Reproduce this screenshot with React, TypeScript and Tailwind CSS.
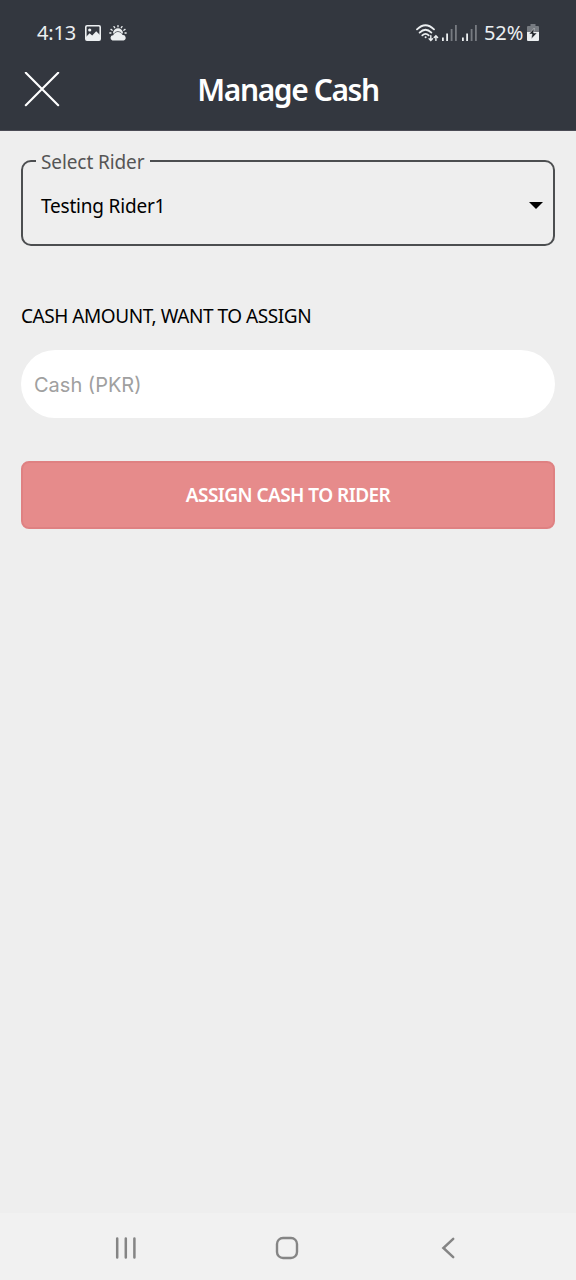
import { useState } from "react";

const RIDERS = ["Testing Rider1"];

function StatusBar() {
  return (
    <div className="flex h-[66px] items-center pl-[37px] pr-[37px] text-[#eceff1]">
      <span className="w-[39px] whitespace-nowrap text-[20px] leading-6 tracking-[-0.2px]">4:13</span>
      {/* Gallery */}
      <svg className="ml-[9px] h-4 w-4" viewBox="0 0 16 16">
        <rect x="0.8" y="0.8" width="14.4" height="14.4" rx="1.2" fill="none" stroke="currentColor" strokeWidth="1.6" />
        <circle cx="4.7" cy="5" r="1.6" fill="currentColor" />
        <path d="M1 12 4.6 8.2 7.2 10.6 11.2 6.2 15 10V15H1Z" fill="currentColor" />
      </svg>
      {/* Weather */}
      <svg className="ml-2 h-4 w-[18px]" viewBox="0 0 18 16">
        <path
          d="M9 .6V1.8M5 1.6l.7 1.1M13 1.6l-.7 1.1M2 4.4l1.2.8M16 4.4l-1.2.8M.8 8h1.2M17.2 8h-1.2"
          stroke="currentColor"
          strokeWidth="1.3"
          strokeLinecap="round"
        />
        <path d="M4 8.2a5 5 0 0 1 10 0l-1 .4A4.6 4.6 0 0 0 4.9 8.6Z" fill="currentColor" />
        <path d="M3.4 15.4a2.6 2.6 0 0 1 .8-5.1 5 5 0 0 1 9.4-.2A2.7 2.7 0 0 1 14.6 15.4Z" fill="currentColor" />
      </svg>

      <div className="ml-auto flex items-center">
        {/* Wi-Fi with traffic arrows */}
        <svg className="h-[18px] w-[23px]" viewBox="0 0 23 18" fill="none" stroke="currentColor" strokeLinecap="round">
          <path d="M1 5.4Q9.5-2.8 18 5.4" strokeWidth="1.8" />
          <path d="M3.6 8.6Q9.5 2.8 15.4 8.6" strokeWidth="1.8" />
          <path d="M6.3 11.4Q9.5 8.2 12.7 11.4" strokeWidth="1.8" />
          <circle cx="9.6" cy="13.3" r="1" fill="currentColor" stroke="none" />
          <path d="M14.8 11.6v4.6M13.1 14.7l1.7 1.7 1.7-1.7M19.9 16.4v-4.6M18.2 13.4l1.7-1.7 1.7 1.7" strokeWidth="1.4" />
        </svg>
        <SignalIcon className="ml-[3px]" />
        <SignalIcon className="ml-[5px]" />
        <span className="ml-[7px] w-[42px] whitespace-nowrap text-[20px] leading-6 tracking-[-0.1px]">52%</span>
        {/* Battery */}
        <svg className="ml-[1px] h-[18px] w-3" viewBox="0 0 12 18">
          <path d="M3.5 0h5v2H11a1 1 0 0 1 1 1v5H0V3a1 1 0 0 1 1-1h2.5Z" fill="#777b81" />
          <path d="M0 8h12v8a1 1 0 0 1-1 1H1a1 1 0 0 1-1-1Z" fill="currentColor" />
          <path d="M7.2 4.2 2 10h3.1l-.8 5L10 9H6.6Z" fill="#1f2329" stroke="#eceff1" strokeWidth=".5" />
        </svg>
      </div>
    </div>
  );
}

function SignalIcon({ className }: { className: string }) {
  return (
    <svg className={`h-4 w-[15px] ${className}`} viewBox="0 0 15 16">
      <rect x="0" y="12.5" width="1.8" height="3.5" fill="currentColor" />
      <rect x="4.2" y="8.5" width="1.8" height="7.5" fill="currentColor" />
      <rect x="8.7" y="4" width="1.8" height="12" fill="#777b81" />
      <rect x="13" y="0" width="1.8" height="16" fill="#777b81" />
    </svg>
  );
}

function NavBar() {
  return (
    <nav className="flex h-[67px] items-center bg-[#f1f1f1] pl-[115px] pr-[121px] pt-[2px] text-[#858585]">
      <svg className="h-[22px] w-[22px]" viewBox="0 0 22 22" stroke="currentColor" strokeWidth="2.5" strokeLinecap="round">
        <path d="M2.2 1.6v19M10.8 1.6v19M19.4 1.6v19" />
      </svg>
      <svg className="ml-[138px] h-6 w-6" viewBox="0 0 24 24" fill="none" stroke="currentColor" strokeWidth="2.4">
        <rect x="2" y="2" width="20" height="20" rx="6" />
      </svg>
      <svg className="ml-auto h-[22px] w-[14px]" viewBox="0 0 14 22" fill="none" stroke="currentColor" strokeWidth="2.5" strokeLinecap="round">
        <path d="M12.2 1.8 2.4 11l9.8 9.2" />
      </svg>
    </nav>
  );
}

export default function App() {
  const [rider] = useState(RIDERS[0]);
  const [amount, setAmount] = useState("");

  return (
    <div className="flex h-[1280px] w-[576px] flex-col overflow-hidden bg-[#eeeeee] font-['Noto_Sans',sans-serif]">
      <header className="h-[130px] border-b border-[#4a4b54] bg-[#33373f] box-content">
        <StatusBar />
        <div className="grid h-12 grid-cols-[1fr_auto_1fr] items-center">
          <button className="ml-[24px] w-9" aria-label="Close">
            <svg className="h-9 w-9" viewBox="0 0 36 36" stroke="#fff" strokeWidth="2.1" strokeLinecap="round">
              <path d="M1.8 .8 34.2 33.2M34.2 .8 1.8 33.2" />
            </svg>
          </button>
          <h1 className="whitespace-nowrap text-[30px] font-semibold leading-10 tracking-[-1.4px] text-white">Manage Cash</h1>
        </div>
      </header>

      <main className="flex flex-1 flex-col px-[21px] pt-[18px]">
        {/* Rider select */}
        <fieldset className="h-[97px] rounded-[10px] border-2 border-[#4c4e50] pl-[13px] pr-[10px]">
          <legend className="h-6 w-[114px] whitespace-nowrap pl-[5px] pt-px text-[19px] leading-6 tracking-[-0.1px] text-[#555555]">
            Select Rider
          </legend>
          <button className="flex w-full items-center justify-between pl-[5px] pt-[18px] text-black">
            <span className="whitespace-nowrap pt-px text-[19px] leading-7 tracking-[-0.2px]">{rider}</span>
            <svg className="h-[7px] w-[14px]" viewBox="0 0 14 7">
              <path d="M0 0h14L7 7Z" fill="#000" />
            </svg>
          </button>
        </fieldset>

        <label htmlFor="amount" className="mt-[56px] whitespace-nowrap text-[19px] leading-7 tracking-[-0.45px] text-black">
          CASH AMOUNT, WANT TO ASSIGN
        </label>
        <input
          id="amount"
          value={amount}
          onChange={e => setAmount(e.target.value)}
          placeholder="Cash (PKR)"
          className="mt-5 h-[68px] rounded-full bg-white px-[13px] pt-px font-['Inter',sans-serif] text-[20px] text-black outline-none placeholder:text-[#a0a0a0]"
        />

        <button className="mt-[43px] h-[68px] rounded-[8px] border-2 border-[#df8182] bg-[#e68b8b] text-[19px] font-semibold tracking-[-0.55px] text-white">
          ASSIGN CASH TO RIDER
        </button>
      </main>

      <NavBar />
    </div>
  );
}
